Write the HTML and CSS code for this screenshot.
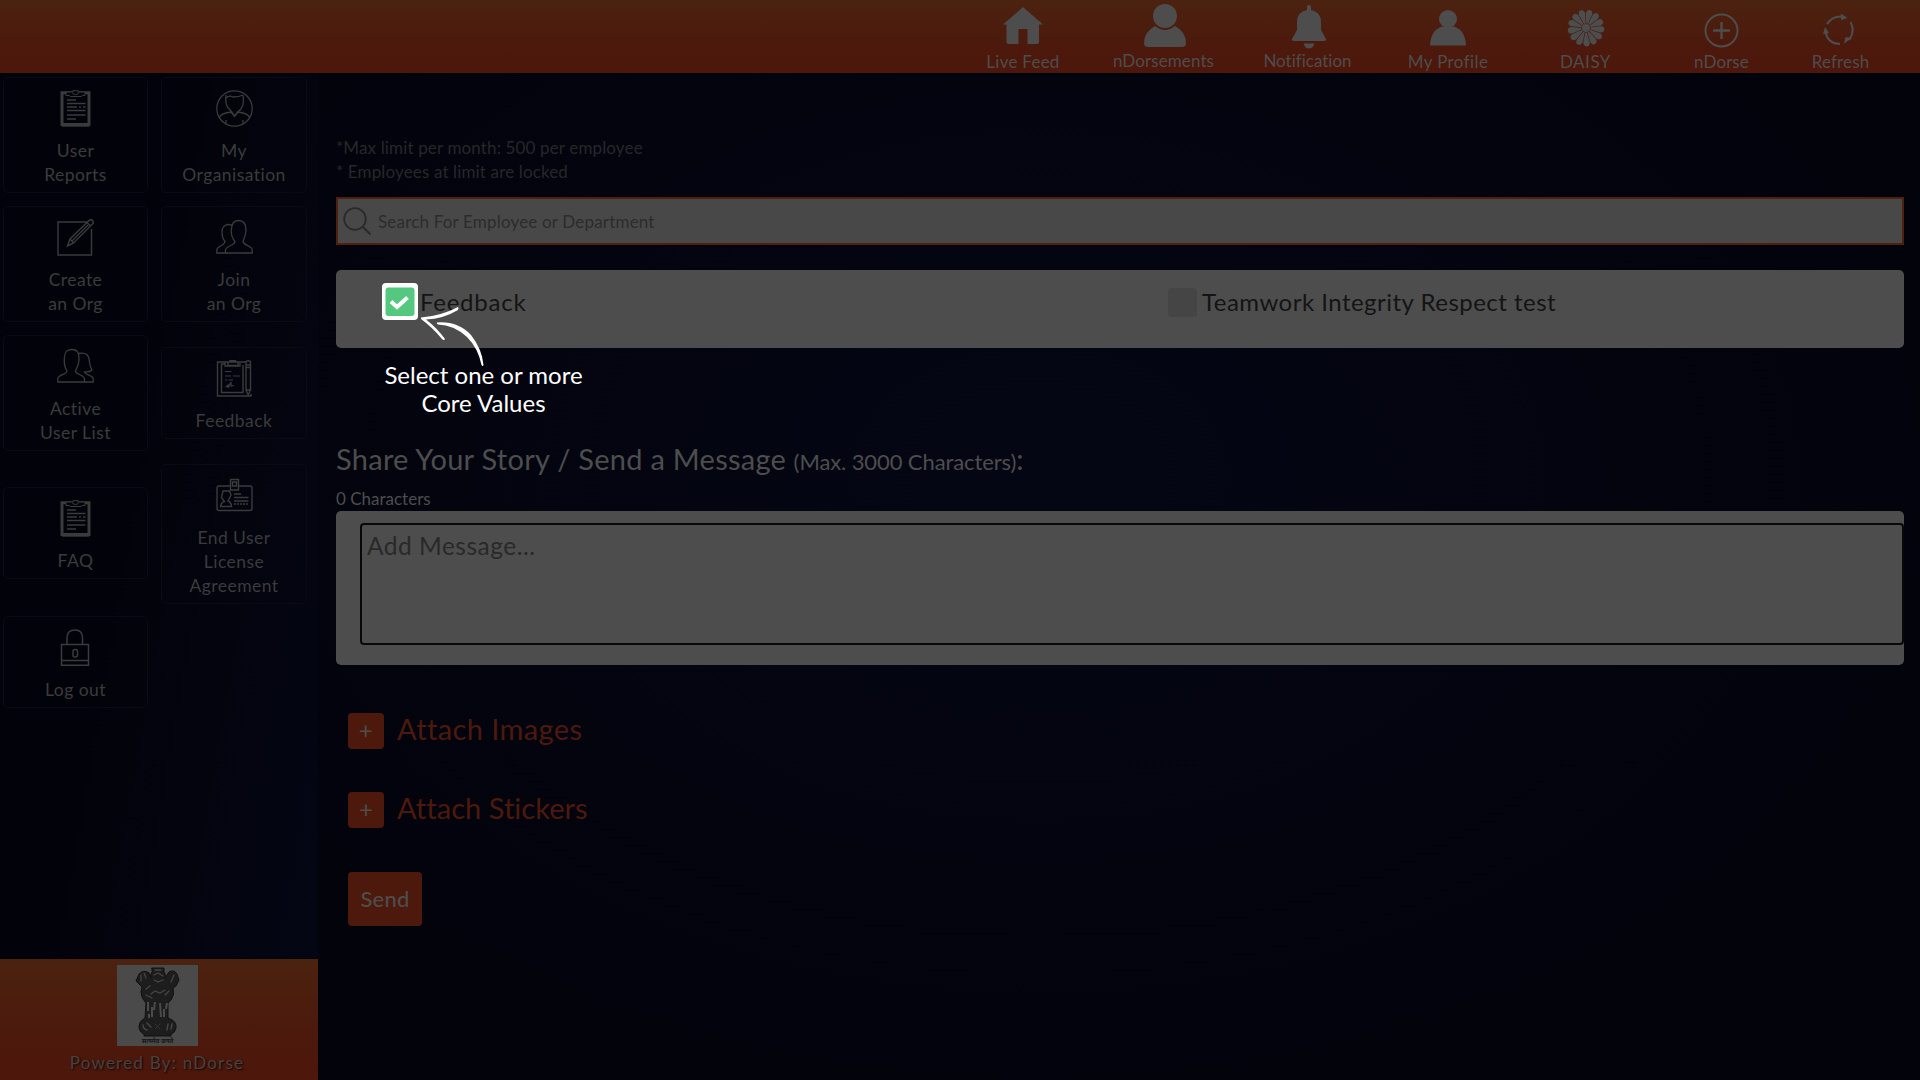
FILE: index.html
```html
<!DOCTYPE html>
<html lang="en">
<head>
<meta charset="utf-8">
<title>nDorse</title>
<link rel="stylesheet" href="styles.css">
</head>
<body>
<svg class="defs" width="0" height="0">
  <defs>
    <symbol id="report" viewBox="0 0 37 37" fill="none" stroke="currentColor">
      <path d="M5 2.8H32V34.5H5Z" stroke-width="3"/><path d="M5 35.7H32" stroke-width="2"/>
      <path d="M9 2V5.5H12L13.5 6.5H24L25.5 5.500H28V2H22.500L21 .8H16L14.500 2Z" fill="#03040b"/><ellipse cx="18.500" cy="2.500" rx="3" ry="2" fill="#03040b"/>
      <path d="M10 10H19M10 13.500H28.500M10 17H20M22 17H24M26 17H28.500M10 20.500H28.500M10 25H28.500M10 29H19" stroke-width="1.300"/>
    </symbol>
    <symbol id="people" viewBox="0 0 37 37" fill="none" stroke="currentColor" stroke-width="1.300">
      <path d="M9.500 34V31C9.500 27 19 26.500 19 22.500C15.500 18.500 15 15 15.300 11C15.500 5 17 1.500 22.500 1.500C28 1.500 30 5 30 11C30 15 28.500 18.500 27 22.500C28 27 36.200 26.500 36.200 31V34Z"/>
      <path d="M16.500 6.500C11 4 6.500 6.500 6 12C6 17 6.500 20 9 22.500C8.500 27 .8 27 .8 31V34H9.500"/>
    </symbol>
  </defs>
</svg>
<div class="app">
  <header class="topbar">
    <nav class="topnav">
      <a class="nav live"><svg width="40" height="38" viewBox="0 0 40 38"><path d="M20 0L40 17.500H36V35Q36 37 34 37H24.500V22H15.500V37H5.500Q3.500 37 3.500 35V17.500H0Z"/></svg><span>Live Feed</span></a>
      <a class="nav ndorsements"><svg width="42" height="43" viewBox="0 0 42 43"><circle cx="21" cy="12" r="12"/><path d="M11 22Q21 30 31 22Q42 28 42 39Q42 43 38 43H4Q0 43 0 39Q0 28 11 22Z"/></svg><span>nDorsements</span></a>
      <a class="nav notification"><svg width="34" height="44" viewBox="0 0 34 44"><path d="M15 5V2Q15 0 17 0Q19 0 19 2V5Q29 7 29 17V25L34 34Q34.500 36 32 36H2Q-.5 36 0 34L5 25V17Q5 7 15 5ZM11.500 38.500H22.500Q21 43.500 17 43.500Q13 43.500 11.500 38.500Z"/></svg><span>Notification</span></a>
      <a class="nav profile"><svg width="36" height="36" viewBox="0 0 36 36"><circle cx="18" cy="9" r="9"/><path d="M0 35.500Q1 19 13 16.500H23Q35 19 36 35.500Z"/></svg><span>My Profile</span></a>
      <a class="nav daisy"><svg width="38" height="38" viewBox="-19 -19 38 38"><defs><path id="petal" d="M-.8-4.500L-3.200-14.500Q-3.100-18.400 0-18.400Q3.100-18.400 3.200-14.500L.8-4.500Z"/></defs><use href="#petal" transform="rotate(12)"/><use href="#petal" transform="rotate(39.700)"/><use href="#petal" transform="rotate(67.400)"/><use href="#petal" transform="rotate(95)"/><use href="#petal" transform="rotate(122.800)"/><use href="#petal" transform="rotate(150.500)"/><use href="#petal" transform="rotate(178)"/><use href="#petal" transform="rotate(206)"/><use href="#petal" transform="rotate(233.500)"/><use href="#petal" transform="rotate(261)"/><use href="#petal" transform="rotate(289)"/><use href="#petal" transform="rotate(316.600)"/><use href="#petal" transform="rotate(344.300)"/><circle r="4"/></svg><span>DAISY</span></a>
      <a class="nav ndorse"><svg width="35" height="35" viewBox="0 0 35 35" fill="none" stroke="#4d4d4d" stroke-width="2"><circle cx="17.500" cy="17.500" r="16"/><path d="M9 17.500H26M17.500 9V26" stroke-width="2.300"/></svg><span>nDorse</span></a>
      <a class="nav refresh"><svg width="32" height="32" viewBox="0 0 32 32"><path d="M4 10Q9 2 19 2.500M27.500 8Q32.500 17 26 26M17 30Q5 30 2.500 18" fill="none" stroke="#4d4d4d" stroke-width="2"/><path d="M18-.5L24.500 4L18 6ZM29 24L21 29.500L22.500 23ZM0 20L2 13L6 19Z"/></svg><span>Refresh</span></a>
    </nav>
  </header>
  <aside class="sidebar">
    <div class="menu">
      <div class="menu-col">
        <a class="tile"><svg class="ico"><use href="#report"/></svg><span>User<br>Reports</span></a>
        <a class="tile"><svg class="ico" viewBox="0 0 37 37" fill="none" stroke="currentColor" stroke-width="1.400"><path d="M30 3H1V36H34.500V10"/><path d="M10.500 27L13 20L32 1.500Q34-.2 35.500 1.500Q37 3.500 35.500 5L16.500 24ZM13 20L16.500 24M30 3.500L33.500 7M15 22L31 6"/></svg><span>Create<br>an Org</span></a>
        <a class="tile"><svg class="ico" viewBox="0 0 37 37" fill="none" stroke="currentColor" stroke-width="1.300"><path d="M.8 34V31C.8 26.500 9.500 27 10 23C7.500 19 7 16 7.300 11C7.500 4 9.500 1.500 14.500 1.500C20 1.500 22 4 22 11C22 16 20.500 19 18.500 23C18.500 27 27.500 26.500 27.500 31V34Z"/><path d="M21.500 5.500C29 4 32 7 32.500 14Q33 19 35 22Q33 24 27.500 24C28 27.500 36.200 27 36.200 31V34H27.500"/></svg><span>Active<br>User List</span></a>
        <a class="tile faq"><svg class="ico"><use href="#report"/></svg><span>FAQ</span></a>
        <a class="tile logout"><svg class="ico" viewBox="0 0 37 37" fill="none" stroke="currentColor" stroke-width="1.500"><path d="M4.500 15.500H31.500V36.200H4.500ZM4.500 31.500H31.500M10 15.500V9Q10 1 18 1Q25.500 1 25.500 9V15.500"/><rect x="16" y="20.500" width="4.500" height="7.500" rx="2"/></svg><span>Log out</span></a>
      </div>
      <div class="menu-col">
        <a class="tile"><svg class="ico" viewBox="0 0 37 37" fill="none" stroke="currentColor" stroke-width="1.300"><circle cx="18.500" cy="18.500" r="17.700"/><path d="M10 5Q9 13 11.500 17Q14 20 15.500 21.500L18.500 26L22 21.500Q25 20 26.500 16Q28 12 27 5M10 8Q13 5 17 7Q23 7 27 5M15.500 22Q5 23 3.500 27.500M21.500 22Q32 23 33.500 27.500M10 30V34M27 30V34M15 22L18.500 26.500L22 22"/></svg><span>My<br>Organisation</span></a>
        <a class="tile"><svg class="ico"><use href="#people"/></svg><span>Join<br>an Org</span></a>
        <a class="tile feedback"><svg class="ico" viewBox="0 0 37 37" fill="none" stroke="currentColor" stroke-width="1.400"><path d="M8 2H1.500V36H35V34M1.500 2H30M5.500 6V32.500H27V5M5.500 6V4H9M12 5.500H22V2H19.500V.8H14V2H12ZM9 2V6H24V3"/><path d="M30 2Q30 .8 32 .8Q34.500 .8 34.500 2V30L32.200 35L30 30ZM30 5H34.500M30 7.500H34.500M30 30H34.500"/><path d="M9 11.500H15.500M9 16H15M17 16H24M9 20H11M12.500 20H17M9.500 27L12 25V28L15 22V26L18 25.500" stroke-width="1.200"/></svg><span>Feedback</span></a>
        <a class="tile license"><svg class="ico" viewBox="0 0 37 37" fill="none" stroke="currentColor" stroke-width="1.400"><path d="M14 9H3Q1 9 1 11V31.500Q1 33.500 3 33.500H34Q36 33.500 36 31.500V11Q36 9 34 9H23"/><path d="M14.500 2.500H22.500V13H14.500ZM16.500 5H20.500V9H16.500Z"/><path d="M4.500 29.500Q5 25.500 8.500 24.500L5.500 20.500L7 14H13.500L15 18L12 24Q15.500 25.500 15.500 29.500ZM18 17H25M18 20.500H32.500M18 24H32.500"/><path d="M18 27H32.500" stroke-dasharray="2 1"/></svg><span>End User<br>License<br>Agreement</span></a>
      </div>
    </div>
    <footer class="powered">
      <div class="emblem"><svg width="81" height="81" viewBox="0 0 81 81" fill="none" stroke="#111" stroke-linecap="round">
        <path fill="#1d1d1d" stroke-width="1" d="M35 3H47V7Q49 9 48 13L52 7Q57 4 60 9L62 15L59 21L56 23Q58 30 54 35L51 38V53Q60 56 59 63Q58 68 54 69V71H27V69Q22 67 22 61Q22 56 28 53L29 38Q24 33 24 27L25 22L19 16L22 9Q27 4 32 8L34 13Q33 9 35 7Z"/>
        <path stroke="#454545" stroke-width="1.300" d="M24 10V16M27 8L29 13M57 10L54 17M38 5H44M37 10L41 8L46 11M37 15L41 17L46 15M29 24L33 21M34 29L38 26L43 28L48 25M52 26L48 30M29 30L35 33"/>
        <path stroke="#4a4a4a" stroke-width="2" stroke-linecap="butt" d="M31 37V46M35 42V52M38 37L37 45M43 38L44 52M47 44V52M50 38L49 44M32 49V53"/>
        <path stroke="#454545" stroke-width="1.500" d="M26 60Q26 64 30 65M30 58L34 62M50 65L51 59M55 59L54 64"/><path stroke="#333" d="M38 59L43 64M43 59L38 64"/>
      </svg><span>सत्यमेव जयते</span></div>
      <p>Powered By: nDorse</p>
    </footer>
  </aside>
  <main class="content">
    <p class="limits"><span>*Max limit per month: 500 per employee</span><br><span>* Employees at limit are locked</span></p>
    <div class="search"><svg width="29" height="29" viewBox="0 0 29 29" fill="none" stroke="#2a2a2a" stroke-width="1.800"><circle cx="12" cy="12" r="10.800"/><path d="M19.500 19.500L27.500 27.500" stroke-width="2.200"/></svg><span>Search For Employee or Department</span></div>
    <section class="values">
      <div class="value"><span class="spot"><svg width="36" height="37" viewBox="0 0 36 37"><rect x="3.500" y="4.500" width="29" height="28.500" rx="3" fill="#55c880"/><path d="M9 18.500L15 24L25.500 14.500" fill="none" stroke="#fff" stroke-width="4"/></svg></span><span class="fb">Feedback</span></div>
      <div class="value"><span class="box"></span><span class="tw">Teamwork Integrity Respect test</span></div>
      <div class="hint">
        <svg width="70" height="62" viewBox="0 0 70 62" fill="#fff"><path d="M7 10.500Q27 9 44 0Q45 1 44 3Q29 12 12 12.500Q23 21 31 32Q30 34 28 32Q18 20 7 12Z"/><path d="M23 15.500Q44 14 57 28Q68 42 69.500 58Q69 60 67.500 58Q64 41 53 30Q40 18 24 17.500Q22 16.500 23 15.500Z"/></svg>
        <p>Select one or more<br>Core Values</p>
      </div>
    </section>
    <h1><span class="title">Share Your Story / Send a Message</span> <small>(Max. 3000 Characters)</small>:</h1>
    <p class="count">0 Characters</p>
    <section class="message"><div class="area">Add Message...</div></section>
    <div class="attach images"><b>+</b><span>Attach Images</span></div>
    <div class="attach stickers"><b>+</b><span>Attach Stickers</span></div>
    <button class="send">Send</button>
  </main>
</div>
</body>
</html>
```
FILE: styles.css
```css
* { box-sizing: border-box; }
body { margin: 0; background: #02030b; font-family: Lato, "Noto Sans", sans-serif; font-variant-ligatures: none; color: #4d4d4d; }
p, h1 { margin: 0; font-weight: 400; }
.defs { position: absolute; }
.app { width: 1920px; height: 1080px; display: grid; grid-template: 73px 1007px / 318px 1602px; overflow: hidden; }
.topbar { grid-column: 1 / 3; background: linear-gradient(#4b2210, #4c190c 65%, #4d170b); display: flex; justify-content: flex-end; }
.topnav { display: flex; padding-right: 26px; }
.nav { display: flex; flex-direction: column; align-items: center; justify-content: space-between; height: 73px; font-size: 17px; line-height: 20px; white-space: nowrap; }
.nav svg { fill: #4d4d4d; flex: none; }
.nav.ndorse svg { fill: none; }
.live { width: 140px; padding: 7px 0 1px; letter-spacing: .25px; }
.ndorsements { width: 141px; padding: 4px 0 2px; letter-spacing: .1px; }
.ndorsements svg, .notification svg { margin-left: 3px; }
.notification { width: 147px; padding: 5px 0 2px; }
.profile { width: 134px; padding: 10px 0 1px; letter-spacing: .4px; }
.daisy { width: 141px; padding: 9px 0 1px; letter-spacing: .5px; }
.ndorse { width: 131px; padding: 13px 0 1px; letter-spacing: .1px; }
.refresh { width: 107px; padding: 14px 0 1px; letter-spacing: .15px; }
.refresh svg { margin-right: 3px; }

.sidebar { display: flex; flex-direction: column; justify-content: space-between; background: linear-gradient(100deg, #02030a 40%, #040614); }
.menu { display: flex; gap: 13px; padding: 4px 0 0 3px; }
.menu-col { width: 145px; display: flex; flex-direction: column; gap: 13px; color: #3b3b3b; }
.menu-col + .menu-col { width: 146px; }
.tile { display: flex; flex-direction: column; align-items: center; gap: 12px; padding: 12px 0 5px; border: 1px solid #090a14; border-radius: 5px; text-align: center; font-size: 17.500px; line-height: 24px; letter-spacing: .45px; }
.tile span { margin: -.5px 0 .5px; }
.ico { width: 37px; height: 37px; }
.faq { margin-top: 23px; }
.logout { margin-top: 24px; }
.feedback, .license { margin-top: 12px; }
.powered { height: 121px; padding-top: 6px; background: linear-gradient(#4b2210, #4c190c 65%, #4d170b); display: flex; flex-direction: column; align-items: center; }
.emblem { width: 81px; height: 81px; margin-right: 3px; background: #4a4a4a; position: relative; }
.emblem svg { display: block; }
.emblem span { position: absolute; left: 0; right: 0; bottom: 1px; text-align: center; font: bold 6px/8px "Noto Sans", sans-serif; color: #151515; }
.powered p { margin: 5px 4px 0 0; font-size: 17px; line-height: 24px; letter-spacing: 1.220px; color: #47413f; text-shadow: 1px 1px 2px #100504; }

.content { padding: 63px 16px 0 18px; display: flex; flex-direction: column; align-items: flex-start; background: radial-gradient(ellipse at 45% 40%, #040614, #02030b 75%); }
.limits { font-size: 17px; line-height: 24px; letter-spacing: .14px; color: #272729; }
.search { width: 1568px; height: 48px; margin-top: 13px; border: 2.500px solid #50200d; background: #484848; display: flex; align-items: center; gap: 6px; padding-left: 5px; font-size: 17px; letter-spacing: .18px; color: #2c2c2c; }
.values { width: 1568px; height: 78px; margin-top: 25px; background: #4d4d4d; border-radius: 5px; display: grid; grid-template-columns: 786px 1fr; position: relative; color: #141414; font-size: 24px; line-height: 30px; }
.value { display: flex; align-items: flex-start; padding: 13px 0 0 46px; }
.value > span:last-child { margin-top: 3.500px; }
.fb { letter-spacing: .75px; }
.tw { letter-spacing: .48px; }
.spot { width: 36px; height: 37px; background: #fff; border-radius: 4px; margin-right: 2px; }
.spot svg { display: block; }
.box { width: 29px; height: 29px; margin: 5px 5px 0 0; background: #454545; border-radius: 4px; }
.hint { position: absolute; left: 48px; top: 37px; width: 199px; color: #fff; text-align: center; font-size: 24px; line-height: 28px; }
.hint svg { display: block; margin-left: 30px; }
.hint p { margin-top: -8px; white-space: nowrap; }
h1 { margin-top: 91px; font-size: 29px; line-height: 40px; white-space: nowrap; }
.title { letter-spacing: .27px; }
h1 small { font-size: 22px; letter-spacing: -.1px; }
.count { margin-top: 5px; font-size: 17px; line-height: 24px; }
.message { width: 1568px; height: 154px; margin-top: 0; padding: 12px 0 0 24px; background: #4d4d4d; border-radius: 5px; }
.area { width: 1544px; height: 122px; border: 2px solid #080808; border-radius: 4px; padding: 3px 5px; font-size: 24.500px; line-height: 35px; letter-spacing: .5px; color: #292929; }
.attach { display: flex; gap: 13px; height: 36px; margin-left: 12px; font-size: 29px; line-height: 31px; color: #4d190c; }
.attach b { width: 36px; height: 36px; border-radius: 4px; background: #4d190c; color: #4d4d4d; font-size: 24px; font-weight: 400; text-align: center; line-height: 34px; }
.images { margin-top: 48px; letter-spacing: .4px; }
.stickers { margin-top: 43px; letter-spacing: .05px; }
.send { width: 74px; height: 54px; margin: 44px 0 0 12px; padding: 0 0 2px; border: 0; border-radius: 4px; background: #4d190c; color: #4d4d4d; font: 500 22px Lato, sans-serif; letter-spacing: .2px; }
```
